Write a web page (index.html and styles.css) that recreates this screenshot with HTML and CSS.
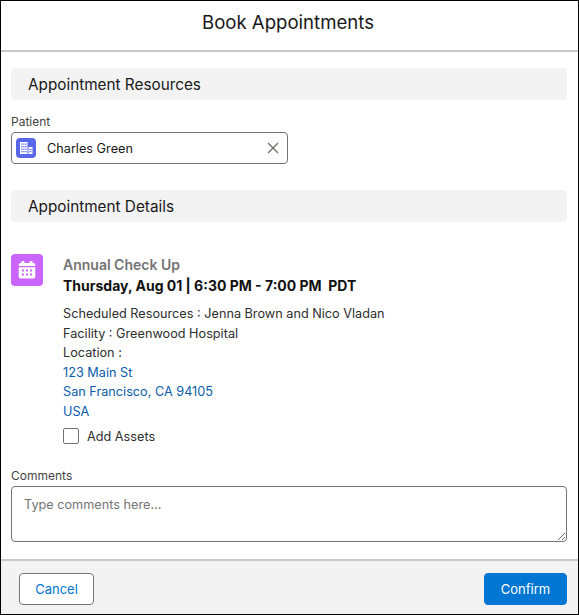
FILE: index.html
```html
<!DOCTYPE html>
<html lang="en">
<head>
<meta charset="UTF-8">
<meta name="viewport" content="width=device-width, initial-scale=1.0">
<title>Book Appointments</title>
<link rel="stylesheet" href="styles.css">
</head>
<body>
    <div class="modal">
        <header class="modal-header">
            <h1>Book Appointments</h1>
        </header>

        <main class="modal-body">
            <h2 class="section-title">Appointment Resources</h2>

            <div class="patient-field">
                <label class="field-label">Patient</label>
                <div class="pill-input">
                    <span class="pill-icon">
                        <svg width="16" height="16" viewBox="0 0 16 16" fill="#fff">
                            <path d="M2 2h7.5v12H2z"/>
                            <path d="M10.5 7H14.5V14H10.5z"/>
                            <path fill="#5867e8" d="M3.2 3.5h1.3v1.3H3.2zM5.2 3.5h1.3v1.3H5.2zM7.2 3.5h1.3v1.3H7.2zM3.2 6h1.3v1.3H3.2zM5.2 6h1.3v1.3H5.2zM7.2 6h1.3v1.3H7.2zM3.2 8.5h1.3v1.3H3.2zM5.2 8.5h1.3v1.3H5.2zM7.2 8.5h1.3v1.3H7.2zM3.2 11h1.3v1.3H3.2zM5.2 11h1.3v1.3H5.2zM7.2 11h1.3v1.3H7.2zM11.3 9h2.4v1h-2.4zM11.3 11.2h2.4v1h-2.4z"/>
                        </svg>
                    </span>
                    <span class="pill-name">Charles Green</span>
                    <svg class="pill-clear" width="12" height="12" viewBox="0 0 12 12">
                        <path d="M1 1l10 10M11 1L1 11" stroke="#706e6b" stroke-width="1.4" fill="none"/>
                    </svg>
                </div>
            </div>

            <h2 class="section-title">Appointment Details</h2>

            <div class="appointment">
                <span class="event-icon">
                    <svg width="20" height="20" viewBox="0 0 20 20" fill="#fff">
                        <path d="M5 1h1.8a.6.6 0 0 1 .6.6V3h5.2V1.600a.6.6 0 0 1 .6-.6H15a.6.6 0 0 1 .6.6V3h1a1.700 1.700 0 0 1 1.700 1.700V6H1.700V4.700A1.700 1.700 0 0 1 3.400 3h1V1.600A.6.6 0 0 1 5 1z"/>
                        <path fill-rule="evenodd" d="M1.700 7.200h16.600v9.600a1.700 1.700 0 0 1-1.700 1.700H3.400a1.700 1.700 0 0 1-1.700-1.700zM5 9.500h2v2H5zM9 9.500h2v2H9zM13 9.500h2v2h-2zM5 13.500h2v2H5zM9 13.500h2v2H9zM13 13.500h2v2h-2z"/>
                    </svg>
                </span>
                <div class="appointment-info">
                    <div class="appointment-type">Annual Check Up</div>
                    <div class="appointment-time">Thursday, Aug 01 | 6:30 PM - 7:00 PM&nbsp; PDT</div>
                    <div class="appointment-lines">
                        <div>Scheduled Resources : Jenna Brown and Nico Vladan</div>
                        <div>Facility : Greenwood Hospital</div>
                        <div>Location :</div>
                        <a href="#" class="address">123 Main St</a>
                        <a href="#" class="address">San Francisco, CA 94105</a>
                        <a href="#" class="address">USA</a>
                    </div>
                    <label class="asset-check">
                        <span class="checkbox"></span>
                        Add Assets
                    </label>
                </div>
            </div>

            <div class="comments-field">
                <label class="field-label">Comments</label>
                <textarea class="comments" placeholder="Type comments here..."></textarea>
            </div>
        </main>

        <footer class="modal-footer">
            <button class="btn btn-cancel">Cancel</button>
            <button class="btn btn-confirm">Confirm</button>
        </footer>
    </div>
</body>
</html>
```

FILE: styles.css
```css
html, body {
    margin: 0;
    height: 100%;
}

body {
    font-family: Inter, "Liberation Sans", sans-serif;
    font-size: 12.7px;
    color: #181818;
    background-color: #fff;
}

.modal {
    box-sizing: border-box;
    height: 615px;
    border: 1px solid #000;
    display: flex;
    flex-direction: column;
}

.modal-header {
    box-sizing: content-box;
    height: 41px;
    padding-bottom: 8px;
    padding-right: 3px;
    border-bottom: 2px solid #c9c9c9;
    display: flex;
    align-items: center;
    justify-content: center;
}

.modal-header h1 {
    margin: 0;
    font-size: 18.6px;
    font-weight: 400;
}

.modal-body {
    flex: 1;
    padding: 16px 11px 0 10px;
}

.section-title {
    margin: 0;
    height: 32px;
    line-height: 34px;
    padding-left: 17px;
    font-size: 15.3px;
    font-weight: 400;
    background-color: #f3f3f3;
    border-radius: 4px;
}

.field-label {
    display: block;
    font-size: 12px;
    line-height: 16px;
    color: #444;
}

.patient-field {
    padding-top: 14px;
    padding-bottom: 26px;
}

.pill-input {
    box-sizing: border-box;
    width: 277px;
    height: 32px;
    margin-top: 2px;
    padding: 0 8px 0 4px;
    border: 1px solid #747474;
    border-radius: 4px;
    display: flex;
    align-items: center;
}

.pill-icon {
    width: 20px;
    height: 20px;
    background-color: #5867e8;
    border-radius: 4px;
    display: flex;
    align-items: center;
    justify-content: center;
}

.pill-name {
    flex: 1;
    margin-left: 11px;
}

.appointment {
    display: flex;
    padding-top: 32px;
}

.event-icon {
    width: 32px;
    height: 32px;
    background-color: #cb65ff;
    border-radius: 4px;
    display: flex;
    align-items: center;
    justify-content: center;
    flex-shrink: 0;
}

.appointment-info {
    margin-left: 20px;
    padding-top: 1px;
}

.appointment-type {
    font-size: 14px;
    font-weight: 600;
    line-height: 20px;
    color: #747474;
}

.appointment-time {
    font-size: 14px;
    font-weight: 700;
    line-height: 22px;
    color: #111;
}

.appointment-lines {
    margin-top: 7px;
    line-height: 19.500px;
    color: #2e2e2e;
}

.address {
    display: block;
    color: #0b5cab;
    text-decoration: none;
}

.asset-check {
    display: flex;
    align-items: center;
    margin-top: 7px;
    color: #2e2e2e;
}

.checkbox {
    box-sizing: border-box;
    width: 16px;
    height: 16px;
    margin-right: 8px;
    border: 1px solid #747474;
    border-radius: 2px;
}

.comments-field {
    margin-top: 24px;
}

.comments {
    box-sizing: border-box;
    display: block;
    width: 100%;
    height: 56px;
    margin-top: 2px;
    padding: 8px 12px;
    border: 1px solid #747474;
    border-radius: 4px;
    font-family: inherit;
    font-size: 12.7px;
    line-height: 20px;
}

.comments::placeholder {
    color: #747474;
}

.modal-footer {
    height: 55px;
    box-sizing: border-box;
    border-top: 2px solid #c9c9c9;
    background-color: #f3f3f3;
    padding: 3px 11px 0 18px;
    display: flex;
    align-items: center;
    justify-content: space-between;
}

.btn {
    height: 32px;
    border-radius: 4px;
    font-family: inherit;
    font-size: 13px;
}

.btn-cancel {
    width: 75px;
    background-color: #fff;
    border: 1px solid #747474;
    color: #0176d3;
}

.btn-confirm {
    width: 83px;
    background-color: #0176d3;
    border: 1px solid #0176d3;
    color: #fff;
}
```
